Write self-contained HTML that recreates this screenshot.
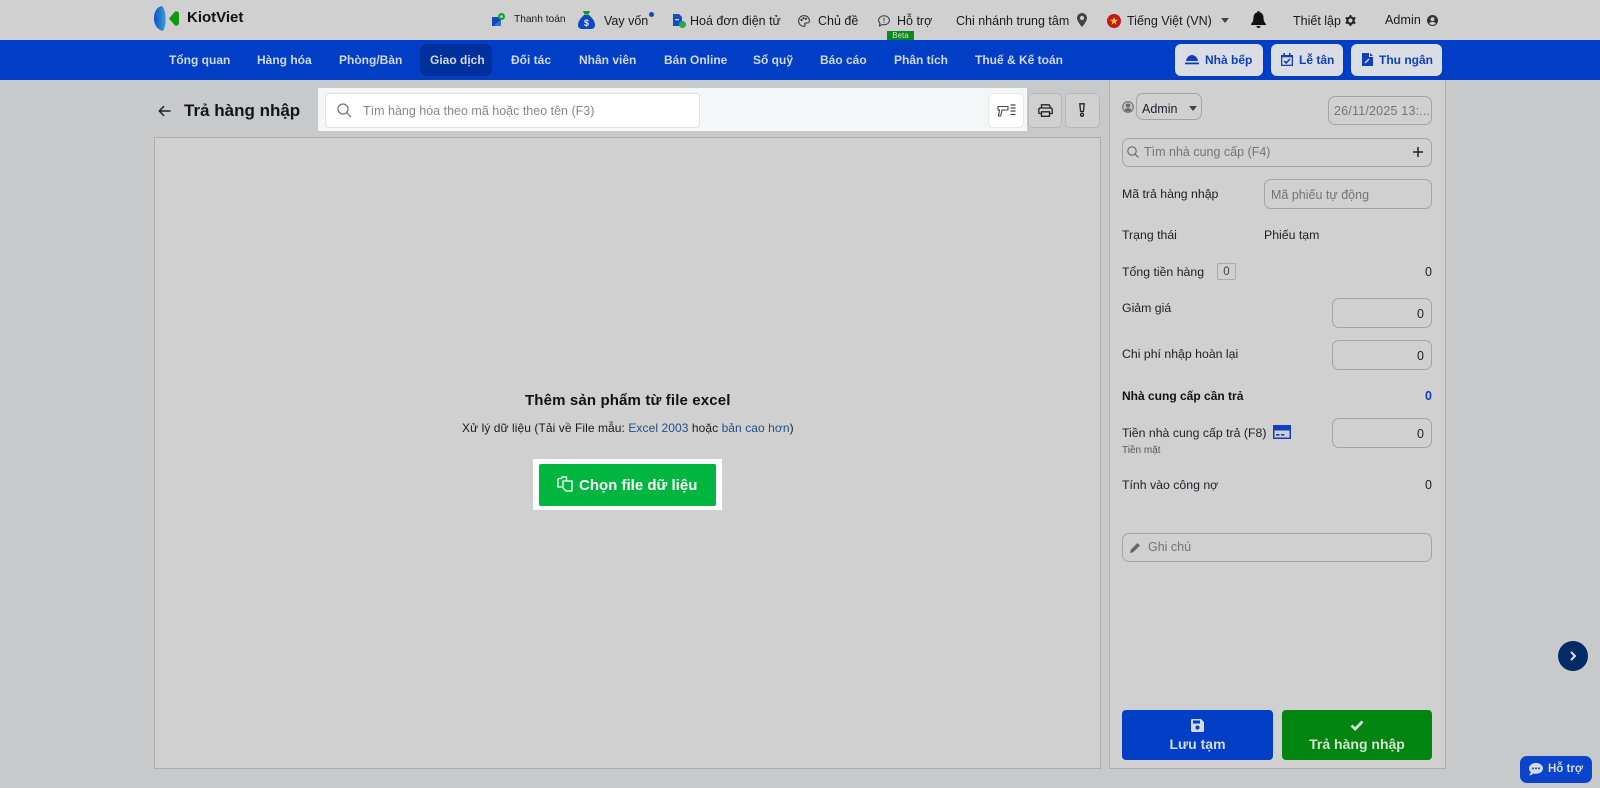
<!DOCTYPE html>
<html lang="vi">
<head>
<meta charset="utf-8">
<title>Trả hàng nhập</title>
<style>
html,body{margin:0;padding:0;width:1600px;height:788px;overflow:hidden;background:#c8c9cb;font-family:"Liberation Sans",Arial,sans-serif;color:#111}
.a{position:absolute;white-space:nowrap;box-sizing:border-box}
.t{font-size:12.5px;line-height:16px;color:#1a1a1a}
.n{font-size:12px;line-height:16px;font-weight:bold;color:#d3d8e6;top:52px}
.l{font-size:12.3px;line-height:16px;color:#1b1f26;left:1122px}
.f{border:1px solid #a4a4a4;border-radius:7px;background:#d0d0d0}
.b{background:#dbdde4;border-radius:6px;top:44px;height:32px}
.bt{font-size:12px;line-height:16px;font-weight:bold;color:#0f3fc0;top:52px}
.g{font-size:12.5px;line-height:16px;color:#747474}
.r{font-size:12.5px;line-height:16px;color:#1b1f26;text-align:right;right:168px}
svg{position:absolute;display:block}
</style>
</head>
<body>
<!-- top bar -->
<div class="a" style="left:0;top:0;width:1600px;height:40px;background:#d0d0d0"></div>
<svg style="left:154px;top:6px" width="26" height="26" viewBox="0 0 26 26"><defs><linearGradient id="lg" x1="0" x2="1" y1="0" y2="0"><stop offset="0" stop-color="#0a52c8"/><stop offset="1" stop-color="#3f9fd8"/></linearGradient></defs><path d="M8 0C2 1 0 7 0 12.500S3 24 9 25C12.500 20 13 5 8 0Z" fill="url(#lg)"/><path d="M15 12.500L21 5.500C23.500 5 25 6 25 8V17C25 19 23.500 20 21 19.500Z" fill="#0a9a12"/></svg>
<div class="a" style="left:187px;top:9px;font-size:15px;line-height:18px;font-weight:bold;color:#111">KiotViet</div>

<svg style="left:492px;top:13px" width="13" height="13" viewBox="0 0 13 13"><path d="M0 4H9V13H0Z" fill="#0f45bd"/><path d="M3 11L9 7V13H3Z" fill="#3a6fd0"/><circle cx="9.500" cy="3.500" r="3.500" fill="#18a33a"/><circle cx="9.500" cy="3.500" r="1.300" fill="#d0d0d0"/></svg>
<div class="a t" style="left:514px;top:12px;font-size:10.2px">Thanh toán</div>
<svg style="left:578px;top:11px" width="17" height="18" viewBox="0 0 17 18"><path d="M5 0H12L10.500 3.500H6.500Z" fill="#0a9a22"/><path d="M6 4H11C14 7 17 10 17 14C17 17 15 18 13 18H4C2 18 0 17 0 14C0 10 3 7 6 4Z" fill="#0d47c4"/><text x="8.500" y="15" font-family="Liberation Sans" font-size="9" font-weight="bold" fill="#e8e8e8" text-anchor="middle">$</text></svg>
<div class="a t" style="left:604px;top:13px">Vay vốn</div>
<div class="a" style="left:649px;top:12px;width:5px;height:5px;border-radius:50%;background:#0f45bd"></div>
<svg style="left:672px;top:14px" width="14" height="14" viewBox="0 0 14 14"><path d="M1 0H7L10 3V12H1Z" fill="#0f4fc4"/><rect x="3" y="5" width="4" height="1.300" fill="#d0d0d0"/><circle cx="10.500" cy="10.500" r="3.500" fill="#2aa84a"/></svg>
<div class="a t" style="left:690px;top:13px">Hoá đơn điện tử</div>
<svg style="left:798px;top:15px" width="12" height="12" viewBox="0 0 12 12" fill="none" stroke="#333" stroke-width="1"><path d="M6 .6C2.800.6.600 3 .600 6S3 11.400 6 11.400C7.500 11.400 7.300 10 6.800 9.400C6.400 8.700 7 8 7.800 8H9.500C10.600 8 11.400 7 11.400 5.800C11.400 2.800 9 .6 6 .6Z"/><circle cx="3.500" cy="5" r=".6" fill="#333"/><circle cx="5.500" cy="3.200" r=".6" fill="#333"/><circle cx="8" cy="3.800" r=".6" fill="#333"/></svg>
<div class="a t" style="left:818px;top:13px">Chủ đề</div>
<svg style="left:878px;top:15px" width="12" height="12" viewBox="0 0 12 12" fill="none" stroke="#333" stroke-width="1"><path d="M6 .8C3 .8.600 2.800.600 5.300C.600 6.500 1.100 7.500 2 8.300L1.500 11L4.300 9.600C4.900 9.700 5.400 9.800 6 9.800C9 9.800 11.400 7.800 11.400 5.300S9 .8 6 .8Z"/><path d="M6 2.800V5.800M6 6.800V7.800"/></svg>
<div class="a t" style="left:897px;top:13px">Hỗ trợ</div>
<div class="a" style="left:887px;top:31px;width:27px;height:9px;background:#0a8a1a;color:#cfe0cf;font-size:8px;line-height:9px;text-align:center">Beta</div>
<div class="a t" style="left:956px;top:13px">Chi nhánh trung tâm</div>
<svg style="left:1077px;top:13px" width="10" height="14" viewBox="0 0 10 14"><path d="M5 0C2.200 0 0 2.200 0 5C0 8.500 5 14 5 14S10 8.500 10 5C10 2.200 7.800 0 5 0ZM5 7A2 2 0 1 1 5 3A2 2 0 0 1 5 7Z" fill="#444"/></svg>
<svg style="left:1107px;top:14px" width="14" height="14" viewBox="0 0 14 14"><circle cx="7" cy="7" r="7" fill="#c4161c"/><path d="M7 2.800L8 5.800H11L8.600 7.700L9.500 10.700L7 8.900L4.500 10.700L5.400 7.700L3 5.800H6Z" fill="#eed21a"/></svg>
<div class="a t" style="left:1127px;top:13px">Tiếng Việt (VN)</div>
<svg style="left:1221px;top:18px" width="8" height="5" viewBox="0 0 8 5"><path d="M0 0H8L4 5Z" fill="#444"/></svg>
<svg style="left:1251px;top:11px" width="15" height="17" viewBox="0 0 15 17"><path d="M7.500 0C6.700 0 6.200.6 6.200 1.400C3.800 2 2.500 4 2.500 6.500C2.500 10 1.500 11.300 0 13V14H15V13C13.500 11.300 12.500 10 12.500 6.500C12.500 4 11.200 2 8.800 1.400C8.800.6 8.300 0 7.500 0ZM5.500 15C5.500 16.200 6.400 17 7.500 17S9.500 16.200 9.500 15Z" fill="#111"/></svg>
<div class="a t" style="left:1293px;top:13px">Thiết lập</div>
<svg style="left:1345px;top:15px" width="11" height="11" viewBox="0 0 11 11"><circle cx="5.500" cy="5.500" r="3.200" fill="none" stroke="#222" stroke-width="2.200"/><path d="M5.500 0V2M5.500 9V11M.7 2.700L2.400 3.700M8.600 7.300L10.300 8.300M.7 8.300L2.400 7.300M8.600 3.700L10.300 2.700" stroke="#222" stroke-width="1.800"/></svg>
<div class="a t" style="left:1385px;top:12px;letter-spacing:.1px">Admin</div>
<svg style="left:1427px;top:15px" width="11" height="11" viewBox="0 0 11 11"><circle cx="5.500" cy="5.500" r="5.500" fill="#333"/><circle cx="5.500" cy="4.200" r="1.900" fill="#d0d0d0"/><path d="M2.200 8.700C3 7.200 4 6.900 5.500 6.900S8 7.200 8.800 8.700C7 10.200 4 10.200 2.200 8.700Z" fill="#d0d0d0"/></svg>

<!-- nav -->
<div class="a" style="left:0;top:40px;width:1600px;height:40px;background:#003fc5"></div>
<div class="a" style="left:420px;top:44px;width:72px;height:32px;background:#00309c;border-radius:6px"></div>
<div class="a n" style="left:169px">Tổng quan</div>
<div class="a n" style="left:257px">Hàng hóa</div>
<div class="a n" style="left:339px">Phòng/Bàn</div>
<div class="a n" style="left:430px">Giao dịch</div>
<div class="a n" style="left:511px">Đối tác</div>
<div class="a n" style="left:579px">Nhân viên</div>
<div class="a n" style="left:664px">Bán Online</div>
<div class="a n" style="left:753px">Sổ quỹ</div>
<div class="a n" style="left:820px">Báo cáo</div>
<div class="a n" style="left:894px">Phân tích</div>
<div class="a n" style="left:975px">Thuế &amp; Kế toán</div>

<div class="a b" style="left:1175px;width:88px"></div>
<svg style="left:1185px;top:54px" width="14" height="11" viewBox="0 0 14 11"><path d="M1 7C1.500 3.500 4 1 7 1S12.500 3.500 13 7Z" fill="#0f3fc0"/><rect x="0" y="8.500" width="14" height="1.800" fill="#0f3fc0"/></svg>
<div class="a bt" style="left:1205px">Nhà bếp</div>
<div class="a b" style="left:1271px;width:72px"></div>
<svg style="left:1281px;top:53px" width="12" height="13" viewBox="0 0 12 13"><path d="M0 2H12V13H0Z" fill="#0f3fc0"/><path d="M2.500 0H4V3H2.500ZM8 0H9.500V3H8Z" fill="#0f3fc0"/><rect x="1.300" y="4.300" width="9.400" height="7.400" fill="#dbdde4"/><path d="M3.200 8L5.200 10L9 6" fill="none" stroke="#0f3fc0" stroke-width="1.600"/></svg>
<div class="a bt" style="left:1299px">Lễ tân</div>
<div class="a b" style="left:1351px;width:91px"></div>
<svg style="left:1362px;top:53px" width="11" height="13" viewBox="0 0 11 13"><path d="M0 0H7V4H11V13H0Z" fill="#0f3fc0"/><path d="M8 0L11 3H8Z" fill="#0f3fc0"/><path d="M3 10L7 6" stroke="#dbdde4" stroke-width="1.300"/></svg>
<div class="a bt" style="left:1379px">Thu ngân</div>

<!-- title row -->
<svg style="left:158px;top:105px" width="13" height="12" viewBox="0 0 13 12" fill="none" stroke="#222" stroke-width="1.500"><path d="M12.500 6H1.500M6 1.200L1.300 6L6 10.800"/></svg>
<div class="a" style="left:184px;top:100px;font-size:17px;line-height:22px;font-weight:bold;color:#141414">Trả hàng nhập</div>
<div class="a" style="left:318px;top:88px;width:709px;height:43px;background:#f5f6f8"></div>
<div class="a" style="left:325px;top:93px;width:375px;height:35px;background:#fff;border:1px solid #dfe1e5;border-radius:4px"></div>
<svg style="left:337px;top:103px" width="15" height="15" viewBox="0 0 15 15" fill="none" stroke="#777" stroke-width="1.300"><circle cx="6" cy="6" r="5"/><path d="M9.700 9.700L14 14"/></svg>
<div class="a" style="left:363px;top:103px;font-size:12.500px;line-height:16px;color:#888">Tìm hàng hóa theo mã hoặc theo tên (F3)</div>
<div class="a" style="left:988px;top:93px;width:36px;height:35px;background:#fff;border:1px solid #e6e7ea;border-radius:5px"></div>
<svg style="left:997px;top:104px" width="19" height="14" viewBox="0 0 19 14" fill="none" stroke="#444" stroke-width="1.100"><path d="M1 2.500H11V6H5L3.700 12H1.500L2.500 6H1Z"/><path d="M13.500 1H18.500M13.500 4H18.500M13.500 7H18.500M13.500 10.500H18.500" stroke-width="1.300"/></svg>
<div class="a" style="left:1028px;top:93px;width:34px;height:35px;background:#d0d0d0;border:1px solid #b8b8b8;border-radius:5px"></div>
<svg style="left:1038px;top:104px" width="15" height="13" viewBox="0 0 15 13" fill="none" stroke="#222" stroke-width="1.300"><path d="M3.500 4V.8H11L12 2V4M.8 9.500V5.500C.8 4.500 1.500 4 2.300 4H12.700C13.500 4 14.200 4.500 14.200 5.500V9.500H11.500M3.500 9.500H.8M3.500 7.800H11.500V12.300H3.500Z"/></svg>
<div class="a" style="left:1065px;top:93px;width:35px;height:35px;background:#d0d0d0;border:1px solid #b8b8b8;border-radius:5px"></div>
<svg style="left:1079px;top:103px" width="6" height="14" viewBox="0 0 6 14" fill="none" stroke="#222" stroke-width="1.300"><path d="M.8.8H5.200L4.400 8.500H1.600Z"/><circle cx="3" cy="11.800" r="1.500"/></svg>

<!-- main panel -->
<div class="a" style="left:154px;top:137px;width:947px;height:632px;background:#d0d0d0;border:1px solid #adadad"></div>
<div class="a" style="left:525px;top:392px;font-size:15px;line-height:18px;font-weight:bold;color:#111;letter-spacing:.14px">Thêm sản phẩm từ file excel</div>
<div class="a" style="left:462px;top:420px;font-size:12px;line-height:16px;color:#1a1a1a;letter-spacing:.07px">Xử lý dữ liệu (Tải về File mẫu: <span style="color:#1f4f86">Excel 2003</span> hoặc <span style="color:#1f4f86">bản cao hơn</span>)</div>
<div class="a" style="left:533px;top:459px;width:189px;height:51px;background:#fff"></div>
<div class="a" style="left:539px;top:464px;width:177px;height:42px;background:#00b63e;border-radius:2px"></div>
<svg style="left:557px;top:476px" width="16" height="16" viewBox="0 0 16 16" fill="none" stroke="#fff" stroke-width="1.300"><path d="M1 2.500H4.500L5 1H9.500V5M1 2.500V11H5.500"/><path d="M6 5H15V15H9L6 12Z"/></svg>
<div class="a" style="left:579px;top:476px;font-size:15px;line-height:20px;font-weight:bold;color:#fff">Chọn file dữ liệu</div>

<!-- right panel -->
<div class="a" style="left:1109px;top:80px;width:337px;height:689px;background:#d0d0d0;border:1px solid #adadad;border-top:0"></div>
<svg style="left:1122px;top:101px" width="12" height="12" viewBox="0 0 12 12"><circle cx="6" cy="6" r="5.400" fill="#bdbdbd" stroke="#6f6f6f"/><circle cx="6" cy="4.500" r="2" fill="#666"/><path d="M2.500 9.500C3.500 7.700 4.500 7.300 6 7.300S8.500 7.700 9.500 9.500C8 10.800 4 10.800 2.500 9.500Z" fill="#666"/></svg>
<div class="a f" style="left:1136px;top:93px;width:66px;height:27px"></div>
<div class="a" style="left:1142px;top:101px;font-size:12.500px;line-height:16px;color:#1b1f26">Admin</div>
<svg style="left:1189px;top:106px" width="8" height="5" viewBox="0 0 8 5"><path d="M0 0H8L4 5Z" fill="#444"/></svg>
<div class="a f" style="left:1328px;top:96px;width:104px;height:29px"></div>
<div class="a g" style="left:1334px;top:103px;letter-spacing:.2px">26/11/2025 13:...</div>
<div class="a f" style="left:1122px;top:138px;width:310px;height:29px"></div>
<svg style="left:1127px;top:146px" width="12" height="12" viewBox="0 0 12 12" fill="none" stroke="#666" stroke-width="1.100"><circle cx="5" cy="5" r="4.200"/><path d="M8 8L11.500 11.500"/></svg>
<div class="a g" style="left:1144px;top:144px">Tìm nhà cung cấp (F4)</div>
<svg style="left:1413px;top:147px" width="10" height="10" viewBox="0 0 10 10"><path d="M5 0V10M0 5H10" stroke="#222" stroke-width="1.500"/></svg>

<div class="a l" style="top:186px">Mã trả hàng nhập</div>
<div class="a f" style="left:1264px;top:179px;width:168px;height:30px"></div>
<div class="a g" style="left:1271px;top:187px">Mã phiếu tự động</div>
<div class="a l" style="top:227px">Trạng thái</div>
<div class="a l" style="left:1264px;top:227px">Phiếu tạm</div>
<div class="a l" style="top:264px">Tổng tiền hàng</div>
<div class="a" style="left:1217px;top:263px;width:19px;height:17px;border:1px solid #ababab;border-radius:2px;font-size:11.500px;line-height:16px;text-align:center;color:#444">0</div>
<div class="a r" style="top:264px">0</div>
<div class="a l" style="top:300px">Giảm giá</div>
<div class="a f" style="left:1332px;top:298px;width:100px;height:30px"></div>
<div class="a r" style="top:306px;right:176px">0</div>
<div class="a l" style="top:346px">Chi phí nhập hoàn lại</div>
<div class="a f" style="left:1332px;top:340px;width:100px;height:30px"></div>
<div class="a r" style="top:348px;right:176px">0</div>
<div class="a l" style="top:388px;font-weight:bold;color:#111;font-size:12px">Nhà cung cấp cần trả</div>
<div class="a r" style="top:388px;font-weight:bold;color:#0f3fc0">0</div>
<div class="a l" style="top:425px">Tiền nhà cung cấp trả (F8)</div>
<svg style="left:1273px;top:425px" width="18" height="14" viewBox="0 0 18 14"><path d="M0 0H18V14H0Z" fill="#0f3fc0"/><rect x="1.500" y="5.500" width="15" height="7" fill="#d0d0d0"/><rect x="3" y="9" width="3.500" height="1.600" fill="#0f3fc0"/><rect x="8" y="9" width="3.500" height="1.600" fill="#0f3fc0"/></svg>
<div class="a" style="left:1122px;top:445px;font-size:10px;line-height:12px;color:#555">Tiền mặt</div>
<div class="a f" style="left:1332px;top:418px;width:100px;height:30px"></div>
<div class="a r" style="top:426px;right:176px">0</div>
<div class="a l" style="top:477px">Tính vào công nợ</div>
<div class="a r" style="top:477px">0</div>
<div class="a f" style="left:1122px;top:533px;width:310px;height:29px"></div>
<svg style="left:1130px;top:542px" width="11" height="11" viewBox="0 0 11 11"><path d="M0 11L.8 7.800L7.500 1L10 3.500L3.200 10.300Z" fill="#666"/></svg>
<div class="a g" style="left:1148px;top:539px">Ghi chú</div>

<div class="a" style="left:1122px;top:710px;width:151px;height:50px;background:#003fc5;border-radius:4px"></div>
<svg style="left:1191px;top:719px" width="13" height="13" viewBox="0 0 13 13"><path d="M0 1.500C0 .6.600 0 1.500 0H10L13 3V11.500C13 12.400 12.400 13 11.500 13H1.500C.6 13 0 12.400 0 11.500Z" fill="#d6dbe8"/><rect x="2" y="1.500" width="7" height="3" fill="#003fc5"/><circle cx="6.500" cy="8.500" r="2" fill="#003fc5"/></svg>
<div class="a" style="left:1122px;top:735px;width:151px;text-align:center;font-size:14px;line-height:18px;font-weight:bold;color:#d6dbe8">Lưu tạm</div>
<div class="a" style="left:1282px;top:710px;width:150px;height:50px;background:#028510;border-radius:4px"></div>
<svg style="left:1350px;top:720px" width="14" height="11" viewBox="0 0 14 11"><path d="M1.500 5.500L5.200 9L12.500 1.500" fill="none" stroke="#d6e2d6" stroke-width="2.800"/></svg>
<div class="a" style="left:1282px;top:735px;width:150px;text-align:center;font-size:14px;line-height:18px;font-weight:bold;color:#d6e2d6">Trả hàng nhập</div>

<!-- floating -->
<div class="a" style="left:1558px;top:641px;width:30px;height:30px;border-radius:50%;background:#032b66"></div>
<svg style="left:1569px;top:651px" width="8" height="10" viewBox="0 0 8 10"><path d="M2 1L6 5L2 9" fill="none" stroke="#e0e0e0" stroke-width="2"/></svg>
<div class="a" style="left:1520px;top:756px;width:72px;height:27px;border-radius:7px;background:#0a44cc"></div>
<svg style="left:1529px;top:763px" width="14" height="13" viewBox="0 0 14 13"><path d="M7 0C3.100 0 0 2.400 0 5.400C0 6.800.6 8 1.700 9C1.500 10.300.9 11.500 0 12.500C1.900 12.300 3.300 11.700 4.300 10.500C5.100 10.700 6 10.800 7 10.800C10.900 10.800 14 8.400 14 5.400S10.900 0 7 0Z" fill="#d6dbe8"/><circle cx="4" cy="5.400" r="1" fill="#0a44cc"/><circle cx="7" cy="5.400" r="1" fill="#0a44cc"/><circle cx="10" cy="5.400" r="1" fill="#0a44cc"/></svg>
<div class="a" style="left:1548px;top:761px;font-size:11.500px;line-height:16px;color:#d6dbe8;font-weight:bold">Hỗ trợ</div>
</body>
</html>
